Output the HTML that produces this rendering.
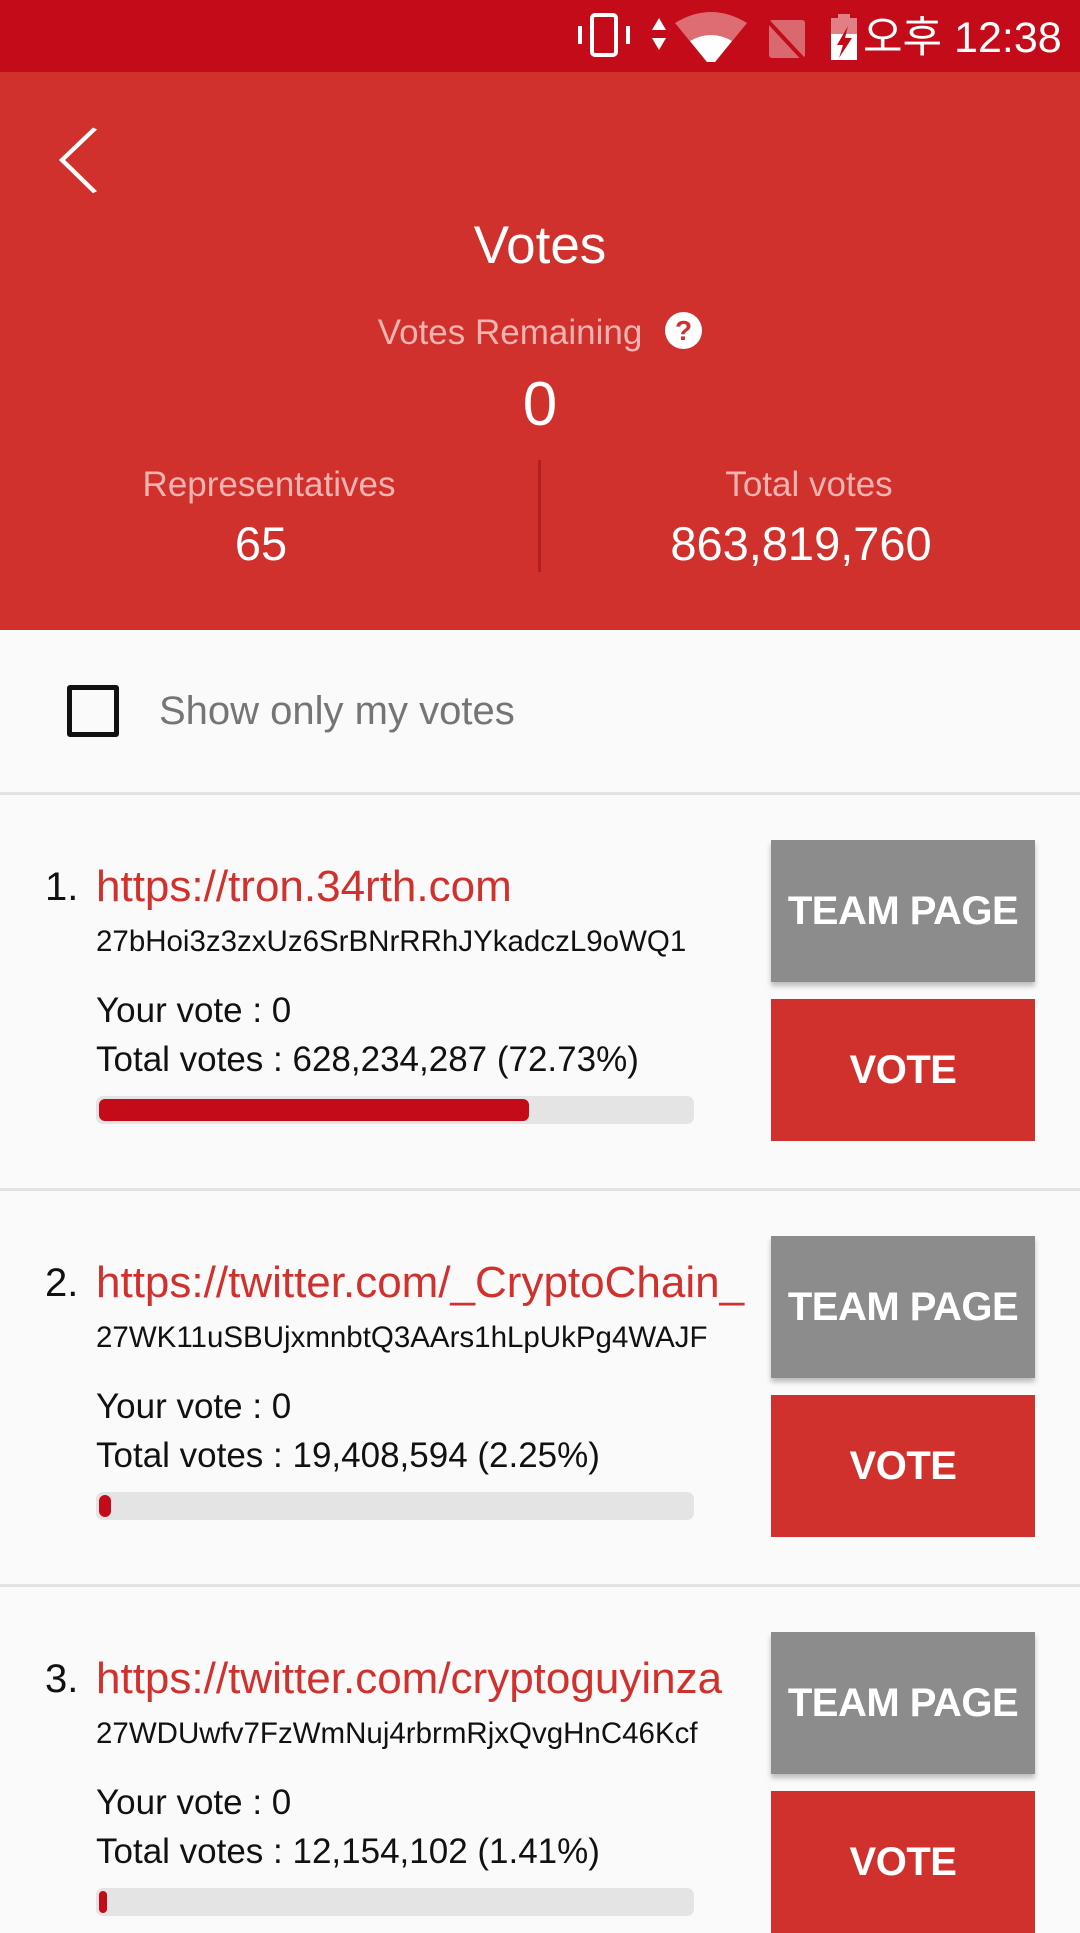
<!DOCTYPE html>
<html><head><meta charset="utf-8"><style>
*{margin:0;padding:0;box-sizing:border-box}
body{width:1080px;height:1920px;overflow:hidden;background:#fafafa;font-family:"Liberation Sans","Noto Sans CJK KR",sans-serif;position:relative}
.a{position:absolute;white-space:nowrap}
.w{position:absolute;left:0;top:9px;width:1080px;height:1920px}
.sb{position:absolute;left:0;top:0;width:1080px;height:72px;background:#c30b19}
.hd{position:absolute;left:0;top:72px;width:1080px;height:558px;background:#d0312d}
.c{transform:translateX(-50%)}
.btn{position:absolute;left:771px;width:264px;height:142px;color:#fff;font-size:40px;font-weight:bold;display:flex;align-items:center;justify-content:center;letter-spacing:-0.5px}
.tp{background:#8c8c8c;box-shadow:0 4px 5px rgba(0,0,0,.25)}
.vt{background:#d0312d}
.bar{position:absolute;left:96px;width:598px;height:28px;background:#e4e4e4;border-radius:7px}
.bar i{position:absolute;left:3px;top:3px;height:22px;background:#c30b19;border-radius:6px}
.sep{position:absolute;left:0;width:1080px;height:3px;background:#e2e2e2}
.lk{color:#d0312d;font-size:44px;top:-3px}
.ad{font-size:29.5px;color:#111}
.tx{font-size:35px;color:#111}
</style></head><body>
<div class="sb"></div>
<svg class="a" style="left:578px;top:12px" width="500" height="50" viewBox="0 0 500 50">
<g fill="#fff">
<rect x="0" y="14" width="4" height="18"/><rect x="48" y="14" width="4" height="18"/>
<rect x="14" y="3" width="24" height="40" rx="3" fill="none" stroke="#fff" stroke-width="4"/>
<polygon points="81,6 88,18 74,18"/><polygon points="74,26 88,26 81,38"/>
<path d="M97,11 Q133,-11 169,11 L133,55 Z" fill="#e38589" opacity=".8"/>
<path d="M112,29 Q133,17 154,29 L133,55 Z"/>
<rect x="191" y="8" width="36" height="38" rx="3" fill="#e08085" opacity=".8"/>
<line x1="187" y1="6" x2="228" y2="50" stroke="#c30b19" stroke-width="4"/>
<rect x="260" y="2" width="12" height="5" fill="#e08085"/>
<rect x="253" y="6" width="26" height="42" fill="#e08085"/>
<rect x="253" y="22" width="26" height="26"/>
<polygon points="270,14 259,33 265,33 261,46 274,26 267,26" fill="#c30b19"/>
</g>
<text x="285" y="40" fill="#fff" font-size="43" font-family="Liberation Sans,Noto Sans CJK KR,sans-serif">오후 12:38</text>
</svg>
<div class="hd"></div>
<div class="w">
<svg class="a" style="left:55px;top:116px" width="50" height="74"><polyline points="40,5 7,50 40,96" transform="scale(1,0.7)" fill="none" stroke="#fff" stroke-width="5"/></svg>
<div class="a c" style="left:540px;top:206px;font-size:53px;color:#fff">Votes</div>
<div class="a c" style="left:510px;top:304px;font-size:35px;color:#f2b3b1">Votes Remaining</div>
<div class="a" style="left:665px;top:303px;width:37px;height:37px;border-radius:50%;background:#fff;color:#d0312d;font-weight:bold;font-size:28px;text-align:center;line-height:37px">?</div>
<div class="a c" style="left:540px;top:360px;font-size:62px;color:#fff">0</div>
<div class="a" style="left:538px;top:451px;width:3px;height:112px;background:#b51d20"></div>
<div class="a c" style="left:269px;top:456px;font-size:35px;color:#f2b3b1">Representatives</div>
<div class="a c" style="left:261px;top:507px;font-size:47px;color:#fff">65</div>
<div class="a c" style="left:809px;top:456px;font-size:35px;color:#f2b3b1">Total votes</div>
<div class="a c" style="left:801px;top:507px;font-size:47px;color:#fff">863,819,760</div>
<div class="a" style="left:67px;top:676px;width:52px;height:52px;border:5px solid #111;border-radius:3px"></div>
<div class="a" style="left:159px;top:680px;font-size:40px;color:#757575">Show only my votes</div>
<div class="sep" style="top:783px"></div>

<div class="a tx" style="left:45px;top:856px;font-size:40px">1.</div>
<div class="a lk" style="left:96px;top:853px">https://tron.34rth.com</div>
<div class="a ad" style="left:96px;top:916px">27bHoi3z3zxUz6SrBNrRRhJYkadczL9oWQ1</div>
<div class="a tx" style="left:96px;top:982px">Your vote : 0</div>
<div class="a tx" style="left:96px;top:1031px">Total votes : 628,234,287 (72.73%)</div>
<div class="bar" style="top:1087px"><i style="width:430px"></i></div>
<div class="btn tp" style="top:831px">TEAM PAGE</div>
<div class="btn vt" style="top:990px">VOTE</div>
<div class="sep" style="top:1179px"></div>

<div class="a tx" style="left:45px;top:1252px;font-size:40px">2.</div>
<div class="a lk" style="left:96px;top:1249px">https://twitter.com/_CryptoChain_</div>
<div class="a ad" style="left:96px;top:1312px">27WK11uSBUjxmnbtQ3AArs1hLpUkPg4WAJF</div>
<div class="a tx" style="left:96px;top:1378px">Your vote : 0</div>
<div class="a tx" style="left:96px;top:1427px">Total votes : 19,408,594 (2.25%)</div>
<div class="bar" style="top:1483px"><i style="width:12px"></i></div>
<div class="btn tp" style="top:1227px">TEAM PAGE</div>
<div class="btn vt" style="top:1386px">VOTE</div>
<div class="sep" style="top:1575px"></div>

<div class="a tx" style="left:45px;top:1648px;font-size:40px">3.</div>
<div class="a lk" style="left:96px;top:1645px">https://twitter.com/cryptoguyinza</div>
<div class="a ad" style="left:96px;top:1708px">27WDUwfv7FzWmNuj4rbrmRjxQvgHnC46Kcf</div>
<div class="a tx" style="left:96px;top:1774px">Your vote : 0</div>
<div class="a tx" style="left:96px;top:1823px">Total votes : 12,154,102 (1.41%)</div>
<div class="bar" style="top:1879px"><i style="width:8px"></i></div>
<div class="btn tp" style="top:1623px">TEAM PAGE</div>
<div class="btn vt" style="top:1782px">VOTE</div>
</div>
</body></html>
